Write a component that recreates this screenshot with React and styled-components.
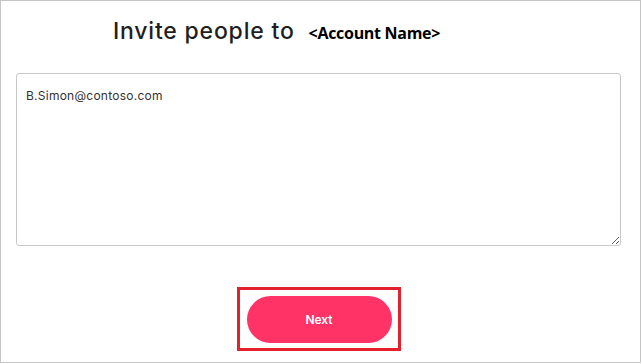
import React from "react";
import styled, { createGlobalStyle } from "styled-components";

const Global = createGlobalStyle`
  html, body { margin: 0; padding: 0; background: #ffffff; }
  * { box-sizing: border-box; }
`;

const Frame = styled.div`
  width: 641px;
  height: 363px;
  border: 1px solid #c6c6c6;
  background: #fff;
  display: flex;
  flex-direction: column;
  padding: 0 19px 0 15px;
`;

const TitleRow = styled.div`
  display: flex;
  align-items: baseline;
  gap: 14px;
  padding: 16px 0 0 97px;
  height: 72px;
`;

const Title = styled.h1`
  margin: 0;
  font-family: "Inter", "Liberation Sans", sans-serif;
  font-weight: 500;
  font-size: 23px;
  letter-spacing: 0.8px;
  color: #1f1f1f;
  line-height: 28px;
`;

const AccountName = styled.span`
  font-family: "Open Sans", "Liberation Sans", sans-serif;
  font-weight: 700;
  font-size: 16px;
  letter-spacing: -0.3px;
  color: #000;
  margin-bottom: 2px;
`;

const EmailBox = styled.textarea`
  display: block;
  width: 605px;
  height: 173px;
  border: 1px solid #c9c9c9;
  border-radius: 3px;
  padding: 14px 9px;
  font-family: "Inter", "Liberation Sans", sans-serif;
  font-size: 12px;
  letter-spacing: 0.25px;
  color: #333;
  resize: vertical;
  outline: none;
  margin: 0;
`;

const Footer = styled.div`
  display: flex;
  justify-content: center;
  padding-top: 41px;
  padding-left: 1px;
`;

const Highlight = styled.div`
  width: 164px;
  height: 64px;
  border: 3px solid #e3202b;
  display: flex;
  align-items: center;
  justify-content: center;
`;

const NextButton = styled.button`
  width: 145px;
  height: 47px;
  border: none;
  border-radius: 24px;
  background: #ff3366;
  color: #fff;
  font-family: "Inter", "Liberation Sans", sans-serif;
  font-weight: 600;
  font-size: 12px;
  cursor: pointer;
`;

export default function App() {
  return (
    <>
      <Global />
      <Frame>
        <TitleRow>
          <Title>Invite people to</Title>
          <AccountName>&lt;Account Name&gt;</AccountName>
        </TitleRow>
        <EmailBox defaultValue="B.Simon@contoso.com" />
        <Footer>
          <Highlight>
            <NextButton>Next</NextButton>
          </Highlight>
        </Footer>
      </Frame>
    </>
  );
}
